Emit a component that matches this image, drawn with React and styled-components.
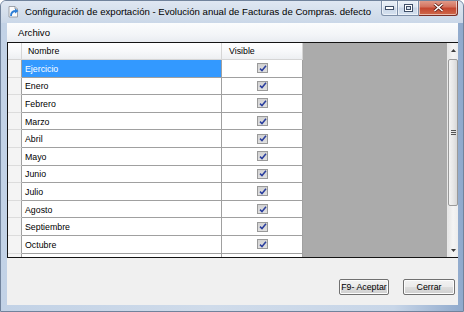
import React from "react";
import styled, { createGlobalStyle } from "styled-components";

const Global = createGlobalStyle`
  html, body { margin: 0; padding: 0; background: #ffffff; }
  body { width: 464px; height: 312px; overflow: hidden; font-family: "Liberation Sans", Arial, sans-serif; }
`;

const Window = styled.div`
  width: 464px;
  height: 312px;
  box-sizing: border-box;
  display: flex;
  flex-direction: column;
  border: 1px solid #71839c;
  border-radius: 6px 6px 0 0;
  background: linear-gradient(to right, #c2d2e6 0%, #cfdbea 45%, #c8d6e8 85%, #8fa9cc 100%);
  overflow: hidden;
`;

const TitleBar = styled.div`
  height: 22px;
  flex: none;
  display: flex;
  align-items: flex-start;
  padding: 0 5px 0 6px;
  background: linear-gradient(to bottom, #dfe7f2 0%, #d3deeb 60%, #cad7e8 100%);
`;

const TitleIcon = styled.svg`
  width: 13px;
  height: 13px;
  margin-top: 4px;
  flex: none;
`;

const TitleText = styled.div`
  margin: 4px 0 0 5px;
  font-size: 9.6px;
  line-height: 13px;
  color: #000;
  white-space: nowrap;
`;

const Controls = styled.div`
  margin-left: auto;
  display: flex;
  margin-top: -1px;
`;

const CaptionBtn = styled.div`
  width: ${(p) => p.w}px;
  height: 16px;
  box-sizing: border-box;
  display: flex;
  align-items: center;
  justify-content: center;
  border: 1px solid ${(p) => (p.close ? "#7a2d24" : "#7d8fa8")};
  border-left-width: ${(p) => (p.first ? 1 : 0)}px;
  border-top: none;
  border-radius: ${(p) => p.radius};
  background: ${(p) =>
    p.close
      ? "linear-gradient(to bottom, #e2a090 0%, #d4735f 45%, #c44630 55%, #cf6a4a 100%)"
      : "linear-gradient(to bottom, #eef3f9 0%, #dde6f1 45%, #c9d6e7 55%, #d6e2f0 100%)"};
  box-shadow: inset 0 0 0 1px rgba(255, 255, 255, 0.55);
`;

const Client = styled.div`
  flex: 1;
  display: flex;
  flex-direction: column;
  margin: 0 5px 6px 6px;
  background: #f0f0f0;
  min-height: 0;
`;

const MenuBar = styled.div`
  height: 19px;
  flex: none;
  display: flex;
  align-items: center;
  padding-left: 11px;
  box-sizing: border-box;
  background: linear-gradient(to bottom, #fbfcfd 0%, #f3f5f8 60%, #e9ecf1 100%);
  font-size: 9.6px;
  color: #000;
`;

const GridBox = styled.div`
  height: 216px;
  flex: none;
  box-sizing: border-box;
  border: 1px solid #141414;
  border-right: none;
  display: flex;
  overflow: hidden;
  background: #ababab;
`;

const Table = styled.div`
  width: 295px;
  flex: none;
  display: flex;
  flex-direction: column;
  overflow: hidden;
  background: #ffffff;
`;

const Filler = styled.div`
  flex: 1;
  background: #ababab;
`;

const COLS = "14px 200px 81px";

const HeaderRow = styled.div`
  display: grid;
  grid-template-columns: ${COLS};
  height: 17px;
  flex: none;
  background: linear-gradient(to bottom, #ffffff 0%, #f7f8fa 50%, #eceef1 100%);
`;

const HeaderCell = styled.div`
  box-sizing: border-box;
  border-right: 1px solid #d5d5d5;
  border-bottom: 1px solid #d5d5d5;
  font-size: 8.8px;
  color: #000;
  padding-left: ${(p) => p.pad || 0}px;
  display: flex;
  align-items: center;
`;

const Row = styled.div`
  display: grid;
  grid-template-columns: ${COLS};
  height: 17.6px;
  flex: none;
`;

const RowHead = styled.div`
  box-sizing: border-box;
  background: #f4f4f4;
  border-right: 1px solid #a0a0a0;
  border-bottom: 1px solid #dcdcdc;
`;

const NameCell = styled.div`
  box-sizing: border-box;
  border-right: 1px solid #a0a0a0;
  border-bottom: 1px solid #a0a0a0;
  background: ${(p) => (p.selected ? "#3399ff" : "#ffffff")};
  color: ${(p) => (p.selected ? "#ffffff" : "#000000")};
  font-size: 8.8px;
  padding: 1px 0 0 3px;
  display: flex;
  align-items: center;
`;

const CheckCell = styled.div`
  box-sizing: border-box;
  border-right: 1px solid #a0a0a0;
  border-bottom: 1px solid #a0a0a0;
  display: flex;
  align-items: center;
  justify-content: center;
  padding-left: 1px;
`;

const CheckBox = styled.div`
  width: 11px;
  height: 10px;
  box-sizing: border-box;
  border: 1px solid #9a9a9a;
  background: linear-gradient(to bottom, #d2d2d2 0%, #e0e0e0 100%);
  display: flex;
  align-items: center;
  justify-content: center;
`;

const ScrollBar = styled.div`
  width: 10px;
  flex: none;
  display: flex;
  flex-direction: column;
  background: linear-gradient(to right, #e6e6e6 0%, #f4f4f4 50%, #ececec 100%);
  border-left: 1px solid #e8e8e8;
`;

const ArrowBtn = styled.div`
  height: 14px;
  flex: none;
  display: flex;
  align-items: center;
  justify-content: center;
`;

const Thumb = styled.div`
  height: 147px;
  flex: none;
  margin: 2px 0 0 0;
  box-sizing: border-box;
  border: 1px solid #9a9a9a;
  border-radius: 2px;
  background: linear-gradient(to right, #f3f3f3 0%, #e8e8e8 50%, #d8d8d8 100%);
  display: flex;
  align-items: center;
  justify-content: center;
`;

const Track = styled.div`
  flex: 1;
`;

const Footer = styled.div`
  flex: 1;
  display: flex;
  justify-content: flex-end;
  align-items: flex-start;
  gap: 14px;
  padding: 21px 3px 0 0;
  background: #f0f0f0;
`;

const Button = styled.button`
  width: ${(p) => p.w}px;
  height: 16px;
  box-sizing: border-box;
  border: 1px solid #707070;
  border-radius: 2px;
  padding: 0;
  background: linear-gradient(to bottom, #f2f2f2 0%, #ebebeb 48%, #dddddd 52%, #cfcfcf 100%);
  box-shadow: inset 0 0 0 1px #fcfcfc;
  font-family: "Liberation Sans", Arial, sans-serif;
  font-size: 8.8px;
  color: #000;
`;

const rows = [
  "Ejercicio",
  "Enero",
  "Febrero",
  "Marzo",
  "Abril",
  "Mayo",
  "Junio",
  "Julio",
  "Agosto",
  "Septiembre",
  "Octubre",
  "",
];

const Check = () => (
  <svg width="8" height="7" viewBox="0 0 8 7">
    <path d="M1 3.6 L3 5.6 L7 0.8" fill="none" stroke="#2b3f9e" strokeWidth="1.5" />
  </svg>
);

export default function App() {
  return (
    <>
      <Global />
      <Window>
        <TitleBar>
          <TitleIcon viewBox="0 0 13 13">
            <path d="M2 1.5 H8 L10.5 4 V12 H2 Z" fill="#fbfbfb" stroke="#8a8f98" strokeWidth="0.8" />
            <path d="M8 1.5 V4 H10.5" fill="#e4e4e4" stroke="#8a8f98" strokeWidth="0.8" />
            <path d="M4 11 C4 7.5 6 6 9 6" fill="none" stroke="#2f7fd6" strokeWidth="1.8" />
            <path d="M8 3.6 L11.5 6 L8 8.4 Z" fill="#2f7fd6" />
          </TitleIcon>
          <TitleText>Configuración de exportación - Evolución anual de Facturas de Compras. defecto</TitleText>
          <Controls>
            <CaptionBtn w={17} first radius="0 0 0 3px">
              <svg width="9" height="4" viewBox="0 0 9 4">
                <rect x="0.5" y="0.5" width="8" height="3" fill="#ffffff" stroke="#3f4f68" />
              </svg>
            </CaptionBtn>
            <CaptionBtn w={21} radius="0">
              <svg width="9" height="8" viewBox="0 0 9 8">
                <rect x="0.5" y="0.5" width="8" height="7" fill="#ffffff" stroke="#3f4f68" />
                <rect x="2.5" y="2.5" width="4" height="3" fill="#d8e2ee" stroke="#3f4f68" />
              </svg>
            </CaptionBtn>
            <CaptionBtn w={39} close radius="0 0 3px 0">
              <svg width="11" height="9" viewBox="0 0 11 9">
                <path d="M1.5 1 L9.5 8 M9.5 1 L1.5 8" stroke="#5a1e16" strokeWidth="3" />
                <path d="M1.5 1 L9.5 8 M9.5 1 L1.5 8" stroke="#ffffff" strokeWidth="1.6" />
              </svg>
            </CaptionBtn>
          </Controls>
        </TitleBar>
        <Client>
          <MenuBar>Archivo</MenuBar>
          <GridBox>
            <Table>
              <HeaderRow>
                <HeaderCell />
                <HeaderCell pad={6}>Nombre</HeaderCell>
                <HeaderCell pad={7}>Visible</HeaderCell>
              </HeaderRow>
              {rows.map((name, i) => (
                <Row key={i}>
                  <RowHead />
                  <NameCell selected={i === 0}>{name}</NameCell>
                  <CheckCell>
                    <CheckBox>
                      <Check />
                    </CheckBox>
                  </CheckCell>
                </Row>
              ))}
            </Table>
            <Filler />
            <ScrollBar>
              <ArrowBtn>
                <svg width="5" height="3" viewBox="0 0 5 3">
                  <path d="M0 3 L2.5 0 L5 3 Z" fill="#3c3c3c" />
                </svg>
              </ArrowBtn>
              <Thumb>
                <svg width="5" height="5" viewBox="0 0 5 5">
                  <path d="M0 0.5 H5 M0 2.5 H5 M0 4.5 H5" stroke="#555" strokeWidth="1" />
                </svg>
              </Thumb>
              <Track />
              <ArrowBtn>
                <svg width="5" height="3" viewBox="0 0 5 3">
                  <path d="M0 0 L2.5 3 L5 0 Z" fill="#3c3c3c" />
                </svg>
              </ArrowBtn>
            </ScrollBar>
          </GridBox>
          <Footer>
            <Button w={50}>F9- Aceptar</Button>
            <Button w={52}>Cerrar</Button>
          </Footer>
        </Client>
      </Window>
    </>
  );
}
